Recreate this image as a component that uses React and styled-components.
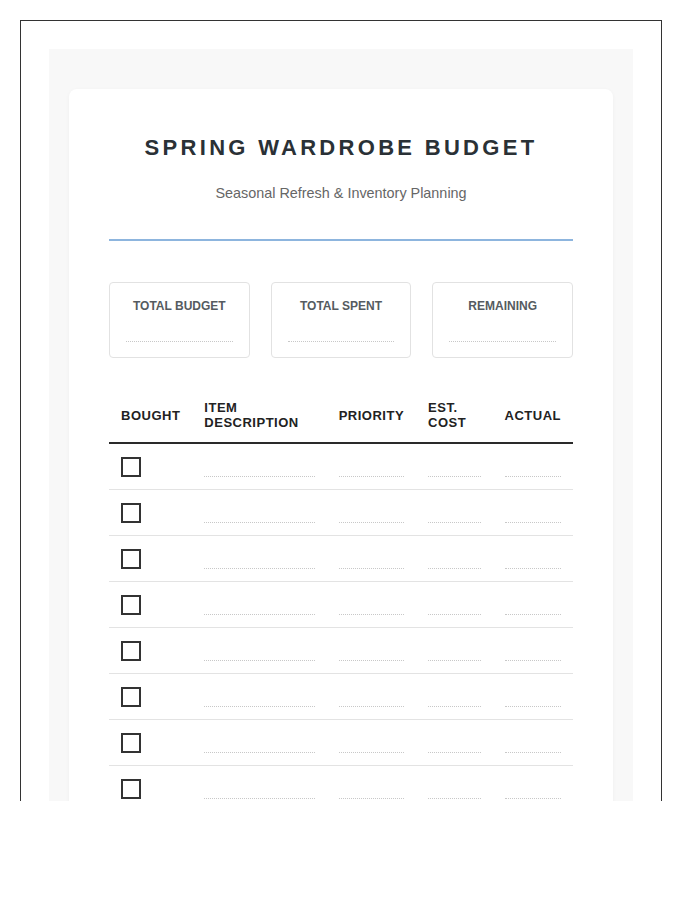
import styled, { createGlobalStyle } from "styled-components";

const GlobalStyle = createGlobalStyle`
  body {
    margin: 0;
    background: #fff;
    font-family: "Liberation Sans", Arial, sans-serif;
  }
`;

const Frame = styled.div`
  margin: 20px 0 0 20px;
  width: 584px;
  height: 752px;
  border: 1px solid #333;
  border-bottom: none;
  overflow: hidden;
  padding: 28px 28px 0;
`;

const Backdrop = styled.div`
  background: #f8f8f8;
  padding: 40px 20px 40px 20px;
  min-height: 100%;
`;

const Card = styled.div`
  background: #fff;
  border-radius: 8px;
  box-shadow: 0 1px 4px rgba(0, 0, 0, 0.04);
  padding: 46px 40px 40px;
`;

const Header = styled.header`
  text-align: center;
  padding-bottom: 38px;
  border-bottom: 2px solid #8db5de;
`;

const Title = styled.h1`
  margin: 0 0 24px;
  font-size: 22px;
  font-weight: 700;
  letter-spacing: 3.3px;
  color: #2a3136;
`;

const Subtitle = styled.p`
  margin: 0;
  font-size: 14.4px;
  color: #666;
`;

const Stats = styled.div`
  display: grid;
  grid-template-columns: repeat(3, 1fr);
  gap: 21px;
  margin-top: 41px;
`;

const StatBox = styled.div`
  border: 1px solid #e2e2e2;
  border-radius: 4px;
  padding: 16px 16px 15px;
  text-align: center;
`;

const StatLabel = styled.div`
  font-size: 12px;
  font-weight: 700;
  color: #555b60;
  line-height: 14px;
`;

const StatValue = styled.div`
  height: 28px;
  border-bottom: 1px dotted #c8c8c8;
`;

const Table = styled.table`
  width: 100%;
  margin-top: 30px;
  border-collapse: collapse;
`;

const Th = styled.th`
  width: ${(props) => props.$w}px;
  padding: 12px;
  text-align: left;
  font-size: 13px;
  font-weight: 700;
  letter-spacing: 0.5px;
  line-height: 15px;
  color: #222;
  border-bottom: 2px solid #2a2a2a;
`;

const Row = styled.tr`
  border-bottom: 1px solid #e3e3e3;
`;

const Td = styled.td`
  padding: 12px;
  vertical-align: top;
`;

const Check = styled.div`
  width: 16px;
  height: 16px;
  border: 2px solid #333;
  margin-top: 1px;
`;

const Blank = styled.div`
  height: 20px;
  border-bottom: 1px dotted #c8c8c8;
`;

const columns = [
  { label: "BOUGHT", w: 83 },
  { label: "ITEM DESCRIPTION", w: 136 },
  { label: "PRIORITY", w: 88 },
  { label: "EST. COST", w: 78 },
  { label: "ACTUAL", w: 78 },
];

const stats = ["TOTAL BUDGET", "TOTAL SPENT", "REMAINING"];

const App = () => {
  const rows = Array.from({ length: 10 }, (_, i) => i);

  return (
    <>
      <GlobalStyle />
      <Frame>
        <Backdrop>
          <Card>
            <Header>
              <Title>SPRING WARDROBE BUDGET</Title>
              <Subtitle>Seasonal Refresh &amp; Inventory Planning</Subtitle>
            </Header>

            <Stats>
              {stats.map((label) => (
                <StatBox key={label}>
                  <StatLabel>{label}</StatLabel>
                  <StatValue />
                </StatBox>
              ))}
            </Stats>

            <Table>
              <thead>
                <tr>
                  {columns.map((col) => (
                    <Th key={col.label} $w={col.w - 24}>
                      {col.label}
                    </Th>
                  ))}
                </tr>
              </thead>
              <tbody>
                {rows.map((r) => (
                  <Row key={r}>
                    <Td>
                      <Check />
                    </Td>
                    <Td>
                      <Blank />
                    </Td>
                    <Td>
                      <Blank />
                    </Td>
                    <Td>
                      <Blank />
                    </Td>
                    <Td>
                      <Blank />
                    </Td>
                  </Row>
                ))}
              </tbody>
            </Table>
          </Card>
        </Backdrop>
      </Frame>
    </>
  );
};

export default App;
